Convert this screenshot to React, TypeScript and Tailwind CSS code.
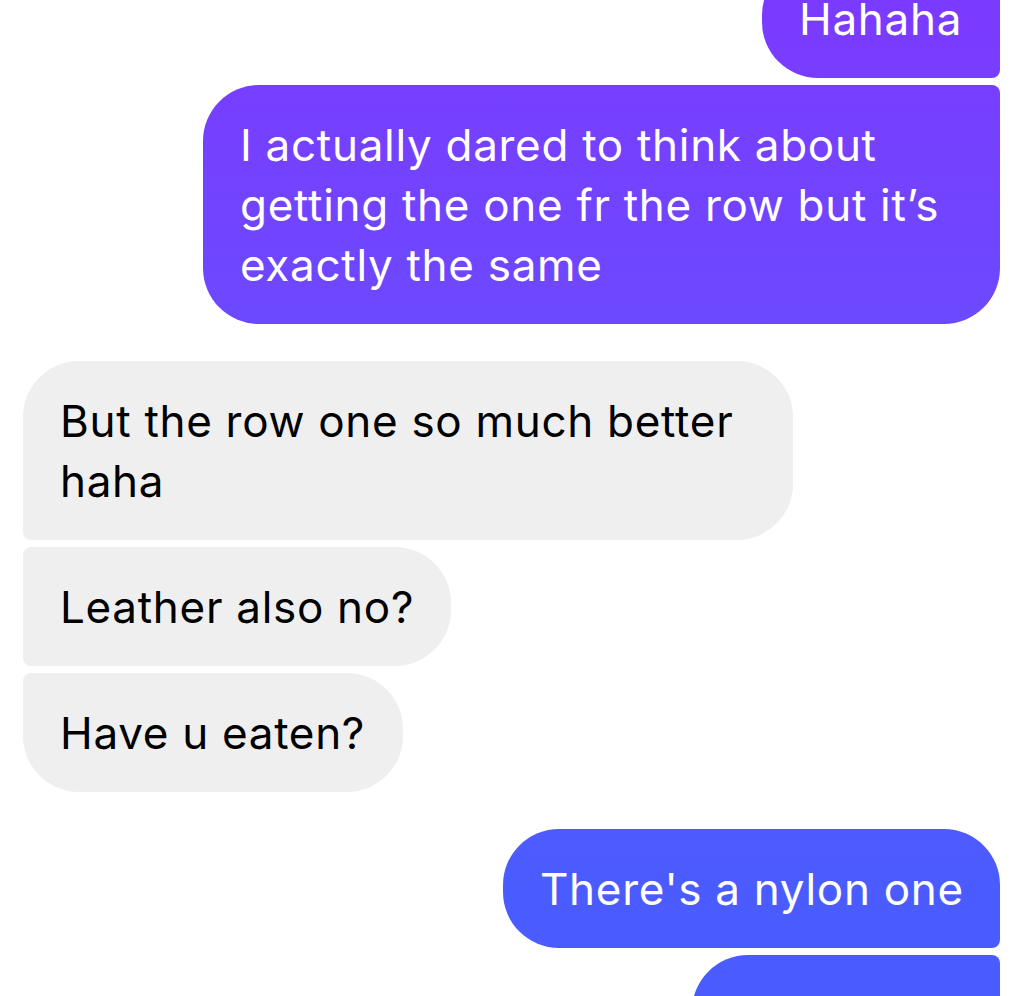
export default function App() {
  const bubble = "px-[37px] pt-[30px] pb-[29px] text-[44px] leading-[60px] tracking-[0.7px] whitespace-nowrap";
  const mine = "self-end text-white bg-fixed bg-linear-to-b from-[#7b3aff] to-[#4a5cff] to-[89%]";
  const theirs = "self-start text-black bg-[#efefef]";

  return (
    <div className="h-[996px] overflow-hidden bg-white font-['Inter',sans-serif]">
      <div className="-mt-[41px] flex flex-col pl-[23px] pr-[25px]">
        <div className={`${bubble} ${mine} w-[238px] rounded-tl-[56px] rounded-tr-[8px] rounded-br-[8px] rounded-bl-[56px]`}>
          Hahaha
        </div>
        <div className={`${bubble} ${mine} mt-[7px] w-[797px] rounded-tl-[56px] rounded-tr-[8px] rounded-br-[56px] rounded-bl-[56px]`}>
          I actually dared to think about
          <br />
          getting the one fr the row but it’s
          <br />
          exactly the same
        </div>

        <div className={`${bubble} ${theirs} mt-[37px] w-[770px] rounded-tl-[56px] rounded-tr-[56px] rounded-br-[56px] rounded-bl-[8px]`}>
          But the row one so much better
          <br />
          haha
        </div>
        <div className={`${bubble} ${theirs} mt-[7px] w-[428px] rounded-tl-[8px] rounded-tr-[56px] rounded-br-[56px] rounded-bl-[8px]`}>
          Leather also no?
        </div>
        <div className={`${bubble} ${theirs} mt-[7px] w-[380px] rounded-tl-[8px] rounded-tr-[56px] rounded-br-[56px] rounded-bl-[56px]`}>
          Have u eaten?
        </div>

        <div className={`${bubble} ${mine} mt-[37px] w-[497px] rounded-tl-[56px] rounded-tr-[56px] rounded-br-[8px] rounded-bl-[56px]`}>
          There's a nylon one
        </div>
        <div className={`${bubble} ${mine} mt-[7px] w-[308px] rounded-tl-[56px] rounded-tr-[8px] rounded-br-[56px] rounded-bl-[56px]`}>
          It's ok lah
        </div>
      </div>
    </div>
  );
}
